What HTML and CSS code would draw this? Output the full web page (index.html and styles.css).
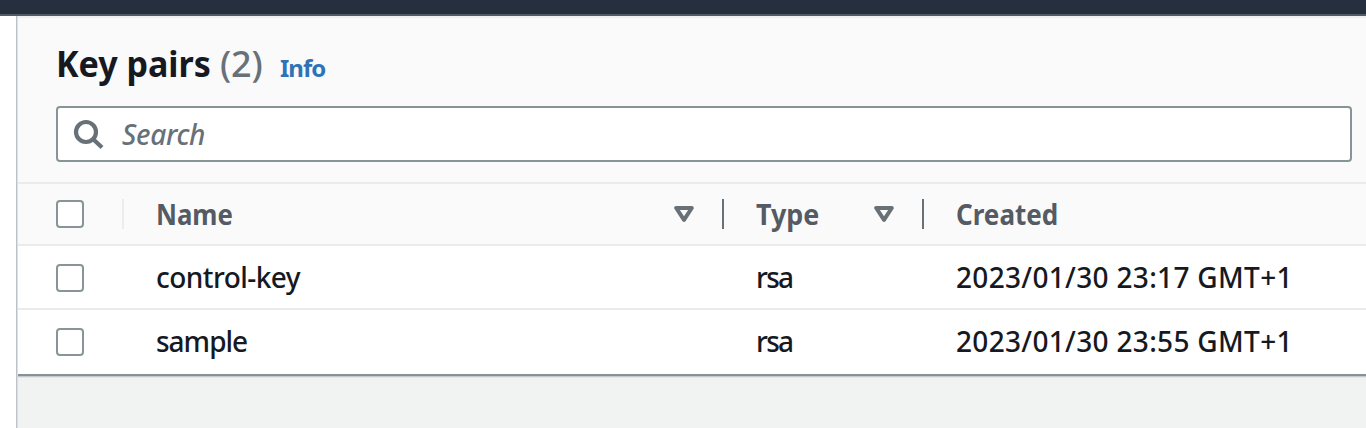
FILE: index.html
```html
<!DOCTYPE html>
<html lang="en">
<head>
<meta charset="utf-8">
<title>Key pairs</title>
<link rel="stylesheet" href="styles.css">
</head>
<body>
<div class="topbar"></div>
<div class="layout">
  <main class="panel">
    <header class="panel-header">
      <div class="heading">
        <h1 class="title"><span class="title-text">Key pairs</span></h1>
        <span class="count">(2)</span>
        <a class="info">Info</a>
      </div>
      <div class="search">
        <svg class="search-icon" width="32" height="32" viewBox="0 0 32 32" fill="none" stroke="#687078" stroke-width="4.2"><circle cx="13" cy="13" r="10"/><path d="M20 20l9 8.5"/></svg>
        <span class="placeholder">Search</span>
      </div>
    </header>
    <div class="row head">
      <div class="cell select"><span class="checkbox"></span></div>
      <div class="cell name"><span class="label t-name">Name</span><svg class="sort" width="20" height="16" viewBox="0 0 20 16" fill="none" stroke="#687078" stroke-width="4" stroke-linejoin="round"><path d="M2.2 2h15.6L10 13.8z"/></svg></div>
      <div class="cell type"><span class="label t-type">Type</span><svg class="sort" width="20" height="16" viewBox="0 0 20 16" fill="none" stroke="#687078" stroke-width="4" stroke-linejoin="round"><path d="M2.2 2h15.6L10 13.8z"/></svg></div>
      <div class="cell created"><span class="label t-created">Created</span></div>
    </div>
    <div class="row">
      <div class="cell select"><span class="checkbox"></span></div>
      <div class="cell name"><span class="t-key">control-key</span></div>
      <div class="cell type"><span class="t-rsa">rsa</span></div>
      <div class="cell created"><span class="t-date">2023/01/30 23:17 GMT+1</span></div>
    </div>
    <div class="row last">
      <div class="cell select"><span class="checkbox"></span></div>
      <div class="cell name"><span class="t-sample">sample</span></div>
      <div class="cell type"><span class="t-rsa">rsa</span></div>
      <div class="cell created"><span class="t-date">2023/01/30 23:55 GMT+1</span></div>
    </div>
  </main>
</div>
</body>
</html>
```
FILE: styles.css
```css
* { box-sizing: border-box; }
body {
  margin: 0;
  height: 428px;
  overflow: hidden;
  display: flex;
  flex-direction: column;
  background: #fff;
  color: #16191f;
  font-family: "Noto Sans", sans-serif;
  font-size: 28px;
  font-weight: 500;
}
.topbar { height: 16px; flex: none; background: #262f3e; border-bottom: 2px solid #545b64; }
.layout { flex: 1; padding-left: 16px; }
.panel { height: 412px; background: #f1f3f3; box-shadow: inset 1px 0 #bcc2c6, inset 2px 0 #dce0e3, inset 3px 0 #edf0f2; }
.panel-header {
  height: 168px;
  margin-left: 2px;
  padding: 26px 14px 0 38px;
  background: #fafafa;
  border-top: 2px solid #f0f0f0;
  border-bottom: 2px solid #ebebeb;
}
.heading { display: flex; align-items: baseline; height: 62px; line-height: 40px; white-space: nowrap; }
.title { margin: 0; width: 164px; font-size: 36px; font-weight: 700; }
.title-text { display: inline-block; transform: scaleX(0.945); transform-origin: left; }
.count { width: 60px; font-size: 36px; color: #687078; letter-spacing: -0.2px; }
.info { font-size: 24px; font-weight: 700; color: #2e73b8; letter-spacing: -1px; }
.search {
  height: 56px;
  display: flex;
  align-items: center;
  gap: 17px;
  padding: 1px 0 0 15px;
  background: #fff;
  border: 2px solid #879596;
  border-radius: 4px;
}
.placeholder { padding-bottom: 2px; font-style: italic; color: #687078; letter-spacing: -0.3px; }
.row { display: flex; height: 64px; margin-left: 2px; background: #fff; border-bottom: 2px solid #ebebeb; line-height: 40px; }
.head { height: 62px; background: #fafafa; color: #545b64; font-weight: 700; }
.last { height: 66px; border-bottom-color: #879196; box-shadow: 0 1px #c4c9cb, 0 2px #e3e6e7; }
.cell { display: flex; align-items: center; position: relative; white-space: nowrap; }
.select { width: 106px; padding-left: 38px; }
.checkbox { width: 28px; height: 28px; background: #fff; border: 2px solid #879596; border-radius: 4px; }
.row:not(.head):not(.last) .select { padding-top: 2px; }
.name { width: 600px; padding: 0 30px 0 32px; }
.type { width: 200px; padding: 0 30px 0 32px; }
.created { flex: 1; padding-left: 32px; }
.label { transform-origin: left; }
.t-name { transform: scaleX(0.92); }
.t-type { transform: scaleX(0.96); }
.t-created { transform: scaleX(0.93); }
.t-key { letter-spacing: -0.55px; }
.t-sample { letter-spacing: -1px; }
.t-rsa { letter-spacing: -1.7px; }
.t-date { letter-spacing: 0.32px; }
.last .name, .last .type, .last .created { padding-bottom: 2px; }
.head .cell { justify-content: space-between; }
.head .cell:not(.created)::after { content: ""; position: absolute; right: 0; top: 15px; width: 2px; height: 30px; background: #687078; }
.head .cell.select::after { background: #eaeded; }
```
